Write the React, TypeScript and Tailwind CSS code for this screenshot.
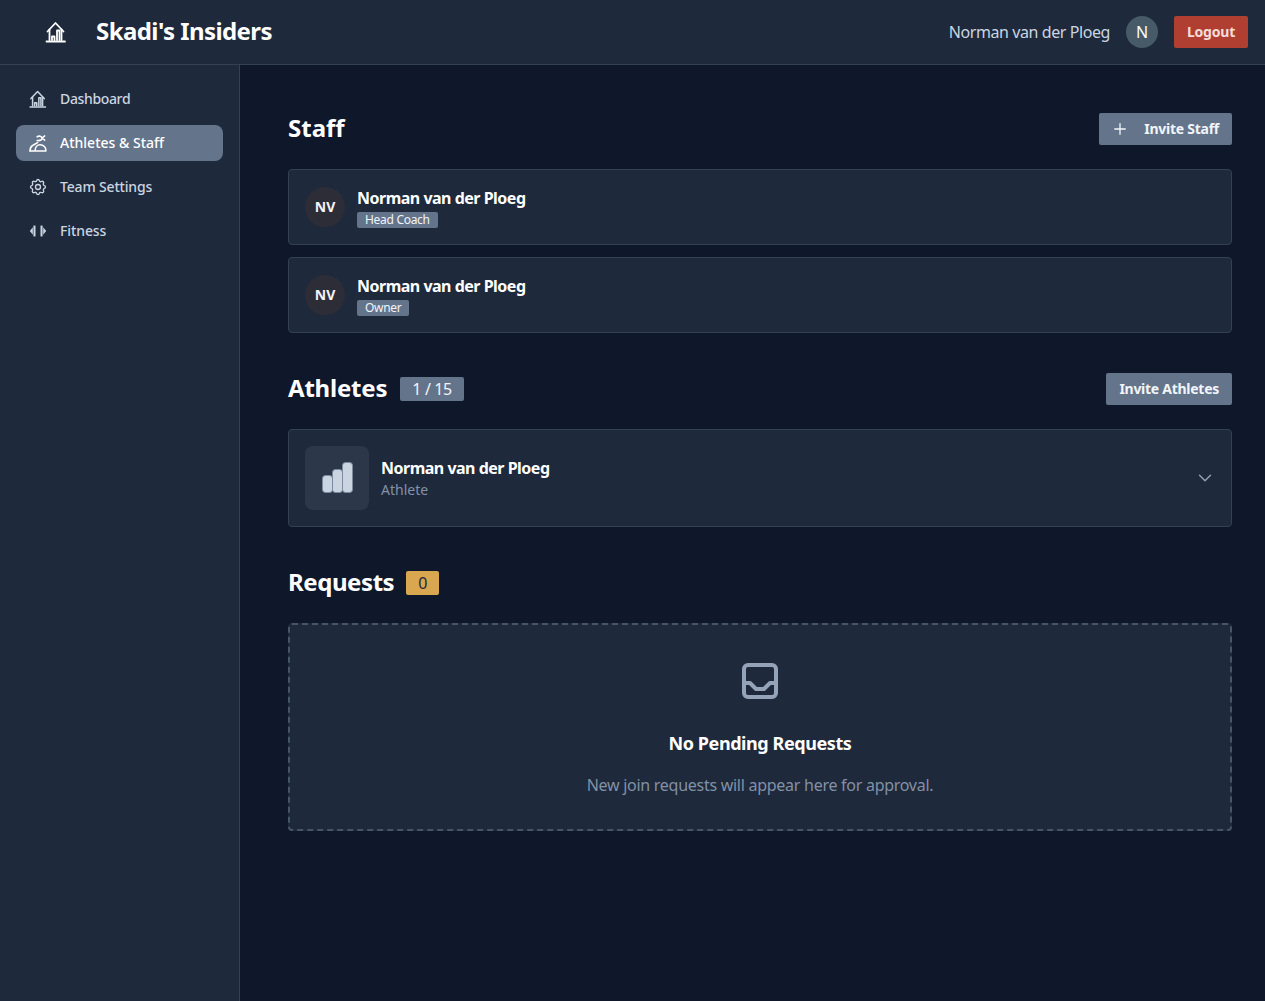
import React from "react";
import { ChevronDown, Plus } from "lucide-react";

const font = "font-['Noto_Sans','DejaVu_Sans',sans-serif]";

function HomeStats({ className = "" }: { className?: string }) {
  return (
    <svg viewBox="0 0 24 24" fill="none" stroke="currentColor" strokeWidth="1.8" strokeLinecap="round" strokeLinejoin="round" className={className}>
      <path d="M3.500 11.500 11.500 3l8 8.500" />
      <path d="M5.500 9.500V20" />
      <path d="M17.500 9.500V20" />
      <path d="M2.500 21.500h18.500" />
      <path d="M8 20v-3.500h2.500V20" />
      <path d="M13 20V10.500h2.500V20" />
    </svg>
  );
}

function Athlete({ className = "" }: { className?: string }) {
  return (
    <svg viewBox="0 0 24 24" fill="none" stroke="currentColor" strokeWidth="1.9" strokeLinecap="round" strokeLinejoin="round" className={className}>
      <path d="M11 4.500c2.500-1.500 5-.5 6 1.500.5 2-2.500 3.500-6 3" />
      <path d="M17 6l3-2.500M17 6l3 2.500" />
      <path d="M2.500 21.500h19c.5-4-3-7.500-7-7.500-3.500 0-6 3-6 7.500" />
      <path d="M2.500 21.500c0-3.500 1-5.500 3-6.500l6-3.500" />
    </svg>
  );
}

function Gear({ className = "" }: { className?: string }) {
  return (
    <svg viewBox="0 0 24 24" fill="none" stroke="currentColor" strokeWidth="1.6" strokeLinecap="round" strokeLinejoin="round" className={className}>
      <path d="M10.325 4.317c.426-1.756 2.924-1.756 3.350 0a1.724 1.724 0 0 0 2.573 1.066c1.543-.940 3.310.826 2.370 2.370a1.724 1.724 0 0 0 1.065 2.572c1.756.426 1.756 2.924 0 3.350a1.724 1.724 0 0 0-1.066 2.573c.940 1.543-.826 3.310-2.370 2.370a1.724 1.724 0 0 0-2.572 1.065c-.426 1.756-2.924 1.756-3.350 0a1.724 1.724 0 0 0-2.573-1.066c-1.543.940-3.310-.826-2.370-2.370a1.724 1.724 0 0 0-1.065-2.572c-1.756-.426-1.756-2.924 0-3.350a1.724 1.724 0 0 0 1.066-2.573c-.940-1.543.826-3.310 2.370-2.370 1 .608 2.296.070 2.572-1.065z" />
      <path d="M9 12a3 3 0 1 0 6 0 3 3 0 0 0-6 0" />
    </svg>
  );
}

function Dumbbell({ className = "" }: { className?: string }) {
  return (
    <svg viewBox="0 0 24 24" fill="currentColor" className={className}>
      <path d="M9 5.500H6.500v13H9z" />
      <path d="M5.800 7.500 2.200 12l3.600 4.500z" />
      <path d="M15 5.500h2.500v13H15z" />
      <path d="M18.200 7.500 21.800 12l-3.600 4.500z" />
    </svg>
  );
}

function Bars({ className = "" }: { className?: string }) {
  return (
    <svg viewBox="0 0 36 36" fill="#cbd5e1" stroke="#7c8aa0" strokeWidth="1" className={className}>
      <rect x="3.500" y="15.500" width="10" height="17" rx="3" />
      <rect x="13.500" y="9.500" width="10" height="23" rx="3" />
      <rect x="23.500" y="2.500" width="10" height="30" rx="3" />
    </svg>
  );
}

function Inbox({ className = "" }: { className?: string }) {
  return (
    <svg viewBox="0 0 24 24" fill="none" stroke="currentColor" strokeWidth="2" strokeLinecap="round" strokeLinejoin="round" className={className}>
      <rect x="4" y="4" width="16" height="16" rx="2" />
      <path d="M4 13h3l3 3h4l3-3h3" />
    </svg>
  );
}

function NavItem({ icon, label, active, tracking }: { icon: React.ReactNode; label: string; active?: boolean; tracking?: string }) {
  return (
    <a className={`flex h-9 items-center gap-3 rounded-lg px-3 text-sm font-medium ${active ? "bg-[#64748b] text-white" : "text-[#cbd5e1]"}`}>
      <span className="flex h-5 w-5 shrink-0 items-center justify-center">{icon}</span>
      <span className={tracking}>{label}</span>
    </a>
  );
}

function StaffCard({ role }: { role: string }) {
  return (
    <div className="flex h-[76px] items-center gap-3 rounded border border-[#334155] bg-[#1e293b] px-4">
      <div className="flex h-10 w-10 items-center justify-center rounded-full bg-[#2d2d38] text-sm font-bold text-[#f1f5f9]">NV</div>
      <div className="flex flex-col items-start">
        <div className="text-base font-bold leading-[22px] tracking-[-0.5px] text-white">Norman van der Ploeg</div>
        <div className="mt-[3px] rounded-[2px] bg-[#64748b] px-2 text-xs leading-4 tracking-[-0.3px] text-[#f1f5f9]">{role}</div>
      </div>
    </div>
  );
}

export default function App() {
  return (
    <div className={`flex min-h-[1001px] flex-col bg-[#0f172a] ${font}`}>
      <header className="flex h-[65px] shrink-0 items-center justify-between border-b border-[#334155] bg-[#1e293b] pl-[44px] pr-[17px]">
        <div className="flex items-center gap-[28px]">
          <HomeStats className="h-6 w-6 text-white" />
          <h1 className="mb-[2px] text-2xl font-bold tracking-[-0.58px] text-white">Skadi's Insiders</h1>
        </div>
        <div className="flex items-center gap-4">
          <span className="text-base tracking-[-0.42px] text-[#cbd5e1]">Norman van der Ploeg</span>
          <div className="flex h-8 w-8 items-center justify-center rounded-full bg-[#475a68] text-base text-white">N</div>
          <button className="h-8 w-[74px] rounded-[2px] bg-[#b03f32] text-sm font-bold tracking-[-0.2px] text-[#f5dcd8]">Logout</button>
        </div>
      </header>
      <div className="flex flex-1">
        <aside className="flex w-[240px] shrink-0 flex-col gap-2 border-r border-[#334155] bg-[#1e293b] p-4">
          <NavItem icon={<HomeStats className="h-5 w-5" />} label="Dashboard" tracking="tracking-[-0.35px]" />
          <NavItem active icon={<Athlete className="h-5 w-5" />} label="Athletes & Staff" />
          <NavItem icon={<Gear className="h-5 w-5" />} label="Team Settings" tracking="tracking-[-0.17px]" />
          <NavItem icon={<Dumbbell className="h-5 w-5" />} label="Fitness" tracking="tracking-[-0.1px]" />
        </aside>
        <main className="flex flex-1 flex-col gap-10 pb-12 pl-12 pr-[33px] pt-12">
          <section>
            <div className="mb-6 flex h-8 items-center justify-between">
              <h2 className="mb-[2px] text-2xl font-bold text-white">Staff</h2>
              <button className="flex h-8 items-center gap-[15px] rounded-[2px] bg-[#64748b] pl-3 pr-[13px] text-sm font-bold tracking-[-0.25px] text-[#f1f5f9]">
                <Plus className="h-[18px] w-[18px]" strokeWidth={1.75} />
                <span>Invite Staff</span>
              </button>
            </div>
            <div className="flex flex-col gap-3">
              <StaffCard role="Head Coach" />
              <StaffCard role="Owner" />
            </div>
          </section>
          <section>
            <div className="mb-6 flex h-8 items-center justify-between">
              <div className="flex items-center gap-[13px]">
                <h2 className="mb-[2px] text-2xl font-bold tracking-[-0.2px] text-white">Athletes</h2>
                <span className="rounded-[2px] bg-[#64748b] px-3 text-base leading-6 tracking-[-0.35px] text-[#f1f5f9]">1 / 15</span>
              </div>
              <button className="h-8 rounded-[2px] bg-[#64748b] px-[13px] text-sm font-bold tracking-[-0.27px] text-[#f1f5f9]">Invite Athletes</button>
            </div>
            <div className="flex h-[98px] items-center gap-3 rounded border border-[#334155] bg-[#1e293b] px-4">
              <div className="flex h-16 w-16 items-center justify-center rounded-lg bg-[#2c3749]">
                <Bars className="h-9 w-9" />
              </div>
              <div className="flex flex-1 flex-col">
                <div className="text-base font-bold leading-6 tracking-[-0.5px] text-white">Norman van der Ploeg</div>
                <div className="text-sm leading-5 text-[#8291a6]">Athlete</div>
              </div>
              <ChevronDown className="h-[22px] w-[22px] -mr-px text-[#94a3b8]" strokeWidth={1.5} />
            </div>
          </section>
          <section>
            <div className="mb-6 flex h-8 items-center gap-3">
              <h2 className="mb-[2px] text-2xl font-bold tracking-[-0.43px] text-white">Requests</h2>
              <span className="rounded-[2px] bg-[#d9a74f] px-3 text-base leading-6 text-[#1e293b]">0</span>
            </div>
            <div className="flex h-[208px] flex-col items-center rounded border-2 border-dashed border-[#475569] bg-[#1e293b] pt-8">
              <Inbox className="h-12 w-12 text-[#94a3b8]" />
              <h3 className="mt-6 text-lg font-bold leading-7 tracking-[-0.42px] text-white">No Pending Requests</h3>
              <p className="mt-4 text-base leading-6 tracking-[-0.27px] text-[#8291a6]">New join requests will appear here for approval.</p>
            </div>
          </section>
        </main>
      </div>
    </div>
  );
}
